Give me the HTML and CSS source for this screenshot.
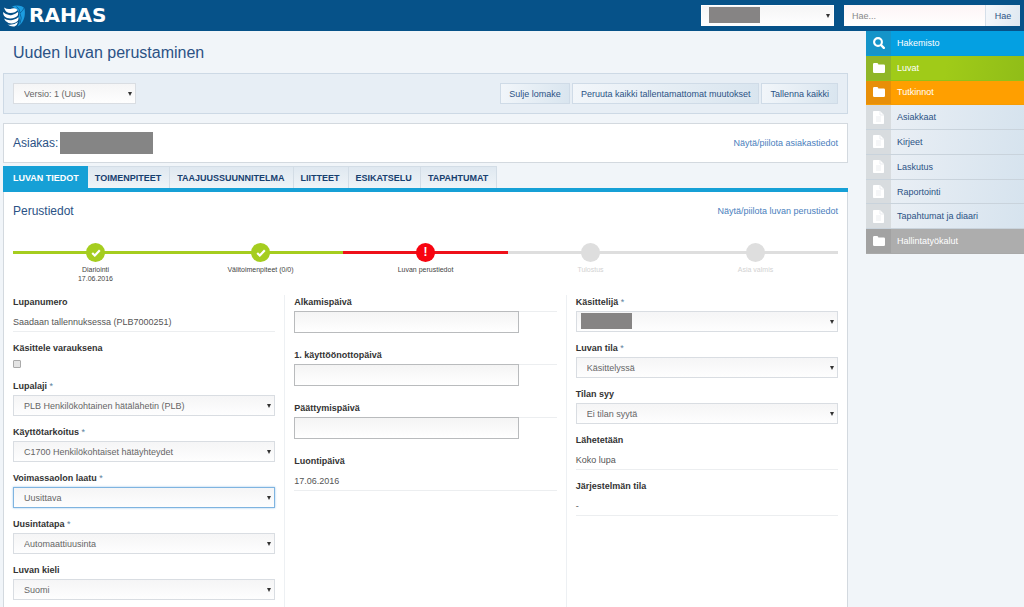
FILE: index.html
```html
<!DOCTYPE html>
<html lang="fi">
<head>
<meta charset="utf-8">
<title>RAHAS - Uuden luvan perustaminen</title>
<link rel="stylesheet" href="styles.css">
</head>
<body>
<svg class="defs" aria-hidden="true">
  <symbol id="folder" viewBox="0 0 12 10"><path d="M0 1.2Q0 0 1.2 0h3Q5.200 0 5.400 1.500h5.400Q12 1.500 12 2.700v6Q12 10 10.800 10H1.200Q0 10 0 8.800z" fill="#fff"/></symbol>
  <symbol id="page" viewBox="0 0 11 13"><path d="M.8 0H7l4 4v8.200q0 .8-.8.800H.8Q0 13 0 12.200V.8Q0 0 .8 0z" fill="#fff"/><path d="M7 0v4h4M3 6h5M3 8h5M3 10h5" fill="none" stroke="#e6e9ec" stroke-width=".8"/></symbol>
  <symbol id="search" viewBox="0 0 12 12"><circle cx="5" cy="5" r="3.900" fill="none" stroke="#fff" stroke-width="2.100"/><path d="M8 8l2.800 2.800" stroke="#fff" stroke-width="2.400" stroke-linecap="round"/></symbol>
  <symbol id="check" viewBox="0 0 10 8"><path d="M1.200 4l2.600 2.500L8.800 1.300" fill="none" stroke="#fff" stroke-width="2.200"/></symbol>
</svg>

<header class="topbar">
  <a class="brand" href="#">
    <svg width="22" height="22" viewBox="0 0 22 22" aria-hidden="true">
      <path d="M9 1.500C14-.5 20 1 21.500 3.500C22.500 9 22 17 14.500 21.500C17 17 17.500 14 15.500 11.500C17.500 8 14.500 4 9 1.500z" fill="#1c9ce0"/>
      <path d="M13.500 1.500q4 3 3.500 7q2.500 4 0 10M17 8q3-2 4-5" fill="none" stroke="#065289" stroke-width=".7"/>
      <path d="M1 2.500q4 2.500 8 1q4-1 5.500 1.500q-2 3-7 3T1 2.500z" fill="#fff"/>
      <path d="M0 7q4 4 9 3q3.500-1 6-3q1 4-3 5.500t-8 .5Q0 11.500 0 7z" fill="#fff"/>
      <path d="M1 13.500q4 2.500 8.500 1.500T15.500 12q.5 4-3 5.500t-7 .5Q2 16.500 1 13.500z" fill="#fff"/>
      <path d="M4.500 19.500q6 1 10.500-2.500q-.5 3-3.500 4.500Q7.500 22 4.500 19.500z" fill="#fff"/>
    </svg>
    <span>RAHAS</span>
  </a>
  <div class="select-wrap user">
    <select class="select" aria-label="Käyttäjä"><option></option></select>
    <span class="mask"></span>
  </div>
  <form class="search">
    <input type="search" placeholder="Hae..." aria-label="Hae">
    <button type="button">Hae</button>
  </form>
</header>

<div class="layout">
  <main class="main">
    <h1>Uuden luvan perustaminen</h1>

    <div class="toolbar">
      <select class="select version" aria-label="Versio"><option>Versio: 1 (Uusi)</option></select>
      <div class="actions">
        <button type="button">Sulje lomake</button>
        <button type="button">Peruuta kaikki tallentamattomat muutokset</button>
        <button type="button">Tallenna kaikki</button>
      </div>
    </div>

    <section class="customer">
      <h2>Asiakas:<span class="name-mask"></span></h2>
      <a class="toggle" href="#">Näytä/piilota asiakastiedot</a>
    </section>

    <nav class="tabs">
      <a class="active" href="#">LUVAN TIEDOT</a>
      <a href="#">TOIMENPITEET</a>
      <a href="#">TAAJUUSSUUNNITELMA</a>
      <a href="#">LIITTEET</a>
      <a href="#">ESIKATSELU</a>
      <a href="#">TAPAHTUMAT</a>
    </nav>

    <section class="panel">
      <div class="panel-head">
        <h2>Perustiedot</h2>
        <a class="toggle" href="#">Näytä/piilota luvan perustiedot</a>
      </div>

      <ol class="steps">
        <li class="done"><span class="dot"><svg width="10" height="8"><use href="#check"/></svg></span>Diariointi<br>17.06.2016</li>
        <li class="done"><span class="dot"><svg width="10" height="8"><use href="#check"/></svg></span>Välitoimenpiteet (0/0)</li>
        <li class="current"><span class="dot">!</span>Luvan perustiedot</li>
        <li><span class="dot"></span>Tulostus</li>
        <li><span class="dot"></span>Asia valmis</li>
      </ol>

      <form class="columns">
        <div class="column">
          <div class="field"><span class="label">Lupanumero</span><p class="value">Saadaan tallennuksessa (PLB7000251)</p></div>
          <div class="field"><label class="label" for="varaus">Käsittele varauksena</label><div class="tick"><input type="checkbox" id="varaus"></div></div>
          <div class="field"><label class="label" for="laji">Lupalaji <i>*</i></label><select class="select" id="laji"><option>PLB Henkilökohtainen hätälähetin (PLB)</option></select></div>
          <div class="field"><label class="label" for="tarkoitus">Käyttötarkoitus <i>*</i></label><select class="select" id="tarkoitus"><option>C1700 Henkilökohtaiset hätäyhteydet</option></select></div>
          <div class="field"><label class="label" for="laatu">Voimassaolon laatu <i>*</i></label><select class="select focused" id="laatu"><option>Uusittava</option></select></div>
          <div class="field"><label class="label" for="uusinta">Uusintatapa <i>*</i></label><select class="select" id="uusinta"><option>Automaattiuusinta</option></select></div>
          <div class="field"><label class="label" for="kieli">Luvan kieli</label><select class="select" id="kieli"><option>Suomi</option></select></div>
        </div>
        <div class="column">
          <div class="field date"><label class="label" for="alku">Alkamispäivä</label><div class="date-row"><input type="text" id="alku"></div></div>
          <div class="field date"><label class="label" for="kaytto">1. käyttöönottopäivä</label><div class="date-row"><input type="text" id="kaytto"></div></div>
          <div class="field date"><label class="label" for="loppu">Päättymispäivä</label><div class="date-row"><input type="text" id="loppu"></div></div>
          <div class="field"><span class="label">Luontipäivä</span><p class="value">17.06.2016</p></div>
        </div>
        <div class="column">
          <div class="field"><label class="label" for="kasittelija">Käsittelijä <i>*</i></label><div class="select-wrap"><select class="select" id="kasittelija"><option></option></select><span class="mask"></span></div></div>
          <div class="field"><label class="label" for="tila">Luvan tila <i>*</i></label><select class="select" id="tila"><option>Käsittelyssä</option></select></div>
          <div class="field"><label class="label" for="syy">Tilan syy</label><select class="select" id="syy"><option>Ei tilan syytä</option></select></div>
          <div class="field"><span class="label">Lähetetään</span><p class="value">Koko lupa</p></div>
          <div class="field"><span class="label">Järjestelmän tila</span><p class="value">-</p></div>
        </div>
      </form>
    </section>
  </main>

  <nav class="side">
    <a class="blue" href="#"><span class="icon"><svg width="12" height="12"><use href="#search"/></svg></span>Hakemisto</a>
    <a class="green" href="#"><span class="icon"><svg width="12" height="10"><use href="#folder"/></svg></span>Luvat</a>
    <a class="orange" href="#"><span class="icon"><svg width="12" height="10"><use href="#folder"/></svg></span>Tutkinnot</a>
    <a href="#"><span class="icon"><svg width="11" height="13"><use href="#page"/></svg></span>Asiakkaat</a>
    <a href="#"><span class="icon"><svg width="11" height="13"><use href="#page"/></svg></span>Kirjeet</a>
    <a href="#"><span class="icon"><svg width="11" height="13"><use href="#page"/></svg></span>Laskutus</a>
    <a href="#"><span class="icon"><svg width="11" height="13"><use href="#page"/></svg></span>Raportointi</a>
    <a href="#"><span class="icon"><svg width="11" height="13"><use href="#page"/></svg></span>Tapahtumat ja diaari</a>
    <a class="grey" href="#"><span class="icon"><svg width="12" height="10"><use href="#folder"/></svg></span>Hallintatyökalut</a>
  </nav>
</div>
</body>
</html>
```

FILE: styles.css
```css
* { box-sizing: border-box; }

body {
  margin: 0;
  min-height: 100vh;
  display: flex;
  flex-direction: column;
  background: #f1f5f9;
  color: #555;
  font: 9px/14px "Liberation Sans", Arial, sans-serif;
}

h1, h2, p, ol { margin: 0; padding: 0; font-weight: normal; }
a { color: inherit; text-decoration: none; }
input, select, button { font: inherit; color: inherit; margin: 0; border-radius: 0; }
.defs { display: none; }

/* Top bar */
.topbar {
  display: flex;
  align-items: center;
  height: 31px;
  padding: 0 4px 0 3px;
  background: #065289;
}
.brand {
  display: flex;
  align-items: center;
  gap: 4px;
  margin-right: auto;
  color: #fff;
  font: bold 20px/24px "DejaVu Sans", sans-serif;
}
.brand span { padding-bottom: 2px; }
.user { width: 133px; margin-right: 10px; }
.user .select { border-color: #fff; background-color: #fafbfe; }
.search { display: flex; width: 176px; height: 21px; }
.search input {
  flex: 1;
  min-width: 0;
  padding: 0 8px;
  border: 0;
  background: linear-gradient(#fdf5f6, #fff);
  appearance: none;
}
.search input::placeholder { color: #888; }
.search button {
  width: 35px;
  padding: 0;
  border: 0;
  border-left: 1px solid #d5dfe9;
  background: linear-gradient(100deg, #f4f7fb, #dfe8f1);
  color: #2b5285;
}

/* Drop-downs */
.select {
  display: block;
  width: 100%;
  height: 21px;
  padding: 0 10px;
  border: 1px solid #d9dde2;
  background: url("data:image/svg+xml,%3Csvg xmlns='http://www.w3.org/2000/svg' width='4' height='4'%3E%3Cpath d='M0 0h4L2 4z' fill='%23333'/%3E%3C/svg%3E") right 3px center no-repeat, linear-gradient(#f5f5f6, #fefefe);
  color: #666;
  appearance: none;
}
.select.focused { border-color: #7fb4e0; box-shadow: 0 0 2px #9cc7ec; }
.select-wrap { position: relative; }
.mask {
  position: absolute;
  top: 2px;
  left: 5px;
  width: 51px;
  height: 16px;
  background: #868484;
}
.user .mask { left: 8px; }

/* Page grid */
.layout {
  flex: 1;
  display: grid;
  grid-template-columns: minmax(0, 1fr) 158px;
  gap: 18px;
}
.main { display: flex; flex-direction: column; padding-left: 3px; }
h1 { padding: 11px 10px 10px; color: #2b5285; font-size: 16px; line-height: 21px; }
h2 { display: flex; align-items: center; color: #2b5285; font-size: 12px; line-height: 16px; }
.toggle { color: #4a80bd; }

.toolbar {
  display: flex;
  justify-content: space-between;
  align-items: center;
  height: 41px;
  padding: 0 9px;
  border: 1px solid #cdd9e5;
  background: #e7eef5;
}
.version { width: 123px; }
.actions { display: flex; gap: 2px; }
.actions button {
  height: 21px;
  padding: 0 8px;
  border: 1px solid #cfdbe7;
  background: linear-gradient(100deg, #f2f6fa, #d9e5ef);
  color: #2b5285;
}

.customer {
  display: flex;
  justify-content: space-between;
  align-items: center;
  height: 40px;
  margin: 9px 0 3px;
  padding: 0 9px;
  border: 1px solid #d3d9df;
  background: #fff;
}
.name-mask { width: 93px; height: 22px; margin-left: 2px; background: #858585; }

.tabs { display: flex; height: 26px; border-bottom: 4px solid #16a0d6; }
.tabs a {
  padding: 4px 8px 4px 7px;
  border: 1px solid #d3dde6;
  border-width: 1px 1px 0 0;
  background: linear-gradient(#dfe8f0, #eff4f8);
  color: #17406f;
  font-weight: bold;
}
.tabs .active { padding-left: 10px; border-color: #16a0d6; background: #16a0d6; color: #fff; }

.panel {
  flex: 1;
  display: flex;
  flex-direction: column;
  padding: 11px 9px 0;
  border: 1px solid #d3d9df;
  border-width: 0 1px;
  background: #fff;
}
.panel-head { display: flex; justify-content: space-between; align-items: center; }

/* Progress steps */
.steps { display: flex; margin: 24px 0 11px; list-style: none; font-size: 7px; line-height: 9px; }
.steps li {
  flex: 1;
  min-height: 41px;
  text-align: center;
  color: #d2d2d2;
  background: linear-gradient(#dedede, #dedede) 0 8px / 100% 3px no-repeat;
}
.steps .dot {
  display: flex;
  align-items: center;
  justify-content: center;
  width: 19px;
  height: 19px;
  margin: 0 auto 3px;
  border-radius: 50%;
  background: #dedede;
  color: #fff;
  font-size: 12px;
  font-weight: bold;
}
.steps .done, .steps .current { color: #444; }
.steps .done { background-image: linear-gradient(#a5cd1f, #a5cd1f); }
.steps .done .dot { background: #a5cd1f; }
.steps .current { background-image: linear-gradient(#ee1019, #ee1019); }
.steps .current .dot { background: #f70410; }

/* Form */
.columns {
  flex: 1;
  display: grid;
  grid-template-columns: minmax(0, 262fr) minmax(0, 272fr) minmax(0, 272fr);
  gap: 9px;
}
.column + .column { padding-left: 9px; border-left: 1px solid #edf0f3; }
.field { margin-bottom: 9px; }
.label { display: block; margin-bottom: 2px; color: #333; font-weight: bold; }
.label i { color: #5b7f9e; font-style: normal; font-weight: normal; }
.value { height: 21px; padding-top: 4px; border-bottom: 1px solid #eceef0; }
.tick { height: 13px; padding-top: 3px; }
.tick input {
  display: block;
  width: 8px;
  height: 8px;
  border: 1px solid #aaa;
  border-radius: 1px;
  background: #e4e4e4;
  appearance: none;
}
.date { margin-bottom: 15px; }
.date-row { border-top: 1px solid #eceef0; }
.date-row input {
  display: block;
  width: 225px;
  max-width: 100%;
  height: 22px;
  margin-top: -1px;
  padding: 0 8px;
  border: 1px solid #b9bbbd;
  background: linear-gradient(#f4f4f4, #fff);
}

/* Side menu */
.side {
  display: grid;
  grid-auto-rows: 1fr;
  align-self: start;
  min-height: 223px;
}
.side a {
  display: flex;
  align-items: center;
  gap: 6px;
  border-bottom: 1px solid #c9d3dc;
  background: linear-gradient(100deg, #edf1f6, #d6e3ee);
  color: #2b5285;
}
.icon {
  display: flex;
  align-items: center;
  justify-content: center;
  align-self: stretch;
  width: 25px;
  background: #d8dcdf;
}
.side .blue { border-color: #069cdc; background: #04a0e2; color: #fff; }
.side .green { border-color: #94c01a; background: linear-gradient(100deg, #a0cb18 50%, #90bd18); color: #fff; }
.side .orange { border-color: #f79c04; background: #ff9f00; color: #fff; }
.side .grey { border-color: #a9a9a9; background: #adadad; color: #fff; }
.blue .icon { background: #1594c9; }
.green .icon { background: #90b628; }
.orange .icon { background: #e88f08; }
.grey .icon { background: #a2a2a2; }
```
